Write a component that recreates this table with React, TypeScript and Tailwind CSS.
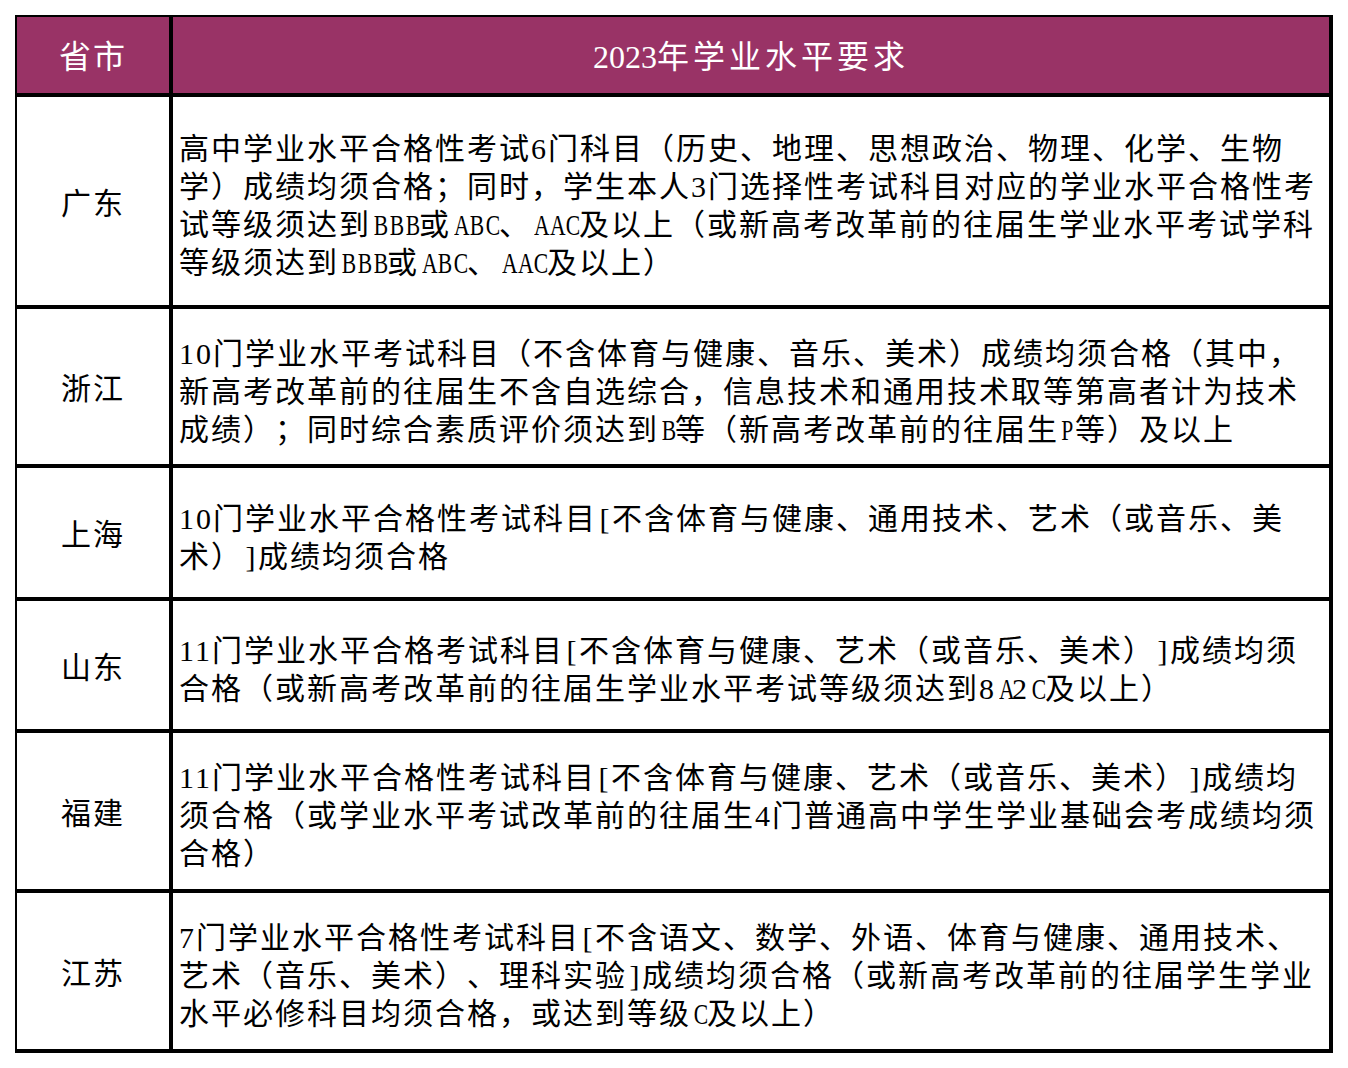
import React from "react";

const rows = [
  {
    name: "广东",
    h: "h-[212px]",
    lines: [
      "高中学业水平合格性考试6门科目（历史、地理、思想政治、物理、化学、生物",
      "学）成绩均须合格；同时，学生本人3门选择性考试科目对应的学业水平合格性考",
      "试等级须达到BBB或ABC、AAC及以上（或新高考改革前的往届生学业水平考试学科",
      "等级须达到BBB或ABC、AAC及以上）",
    ],
  },
  {
    name: "浙江",
    h: "h-[159px]",
    lines: [
      "10门学业水平考试科目（不含体育与健康、音乐、美术）成绩均须合格（其中，",
      "新高考改革前的往届生不含自选综合，信息技术和通用技术取等第高者计为技术",
      "成绩）；同时综合素质评价须达到B等（新高考改革前的往届生P等）及以上",
    ],
  },
  {
    name: "上海",
    h: "h-[133px]",
    lines: [
      "10门学业水平合格性考试科目[不含体育与健康、通用技术、艺术（或音乐、美",
      "术）]成绩均须合格",
    ],
  },
  {
    name: "山东",
    h: "h-[132px]",
    lines: [
      "11门学业水平合格考试科目[不含体育与健康、艺术（或音乐、美术）]成绩均须",
      "合格（或新高考改革前的往届生学业水平考试等级须达到8A2C及以上）",
    ],
  },
  {
    name: "福建",
    h: "h-[160px]",
    lines: [
      "11门学业水平合格性考试科目[不含体育与健康、艺术（或音乐、美术）]成绩均",
      "须合格（或学业水平考试改革前的往届生4门普通高中学生学业基础会考成绩均须",
      "合格）",
    ],
  },
  {
    name: "江苏",
    h: "h-[160px]",
    lines: [
      "7门学业水平合格性考试科目[不含语文、数学、外语、体育与健康、通用技术、",
      "艺术（音乐、美术）、理科实验]成绩均须合格（或新高考改革前的往届学生学业",
      "水平必修科目均须合格，或达到等级C及以上）",
    ],
  },
];

// capitals in the original are narrow half-width glyphs: squeeze each one into a fixed box;
// square brackets get a slightly wider box too
function Line({ text }: { text: string }) {
  const parts = text.split(/([A-Z]|\[|\])/);
  return (
    <div className="whitespace-nowrap">
      {parts.map((p, i) => {
        if (/^[A-Z]$/.test(p))
          return (
            <span key={i} className="inline-block w-[16px] text-center tracking-normal">
              <span className="inline-block scale-x-[0.72]">{p}</span>
            </span>
          );
        if (p === "[" || p === "]")
          return (
            <span key={i} className="inline-block w-[15px] text-center tracking-normal">{p}</span>
          );
        return <span key={i}>{p}</span>;
      })}
    </div>
  );
}

export default function App() {
  return (
    <div className="min-h-screen bg-white pt-[15px] pl-[15px] font-['Liberation_Serif','Noto_Sans_CJK_SC',serif] text-black [text-spacing-trim:space-all]">
      <div className="w-[1318px] border-t-2 border-l-2 border-black grid grid-cols-[156px_1160px]">
        {/* header */}
        <div className="h-[80px] pt-1 border-r-4 border-b-4 border-black bg-[#993366] text-white text-[32px] tracking-[2px] flex items-center justify-center">
          省市
        </div>
        <div className="h-[80px] pt-1 border-r-4 border-b-4 border-black bg-[#993366] text-white text-[32px] flex items-center justify-center">
          <span className="tracking-normal">2023</span>
          <span className="tracking-[4px]">年学业水平要求</span>
        </div>

        {rows.map(r => (
          <React.Fragment key={r.name}>
            <div className={`${r.h} pt-[4px] border-r-4 border-b-4 border-black text-[30px] tracking-[2px] flex items-center justify-center`}>
              {r.name}
            </div>
            <div className={`${r.h} pt-[10px] border-r-4 border-b-4 border-black pl-[6px] text-[30px] leading-[38px] tracking-[2px] flex flex-col justify-center`}>
              {r.lines.map((l, i) => <Line key={i} text={l} />)}
            </div>
          </React.Fragment>
        ))}
      </div>
    </div>
  );
}
